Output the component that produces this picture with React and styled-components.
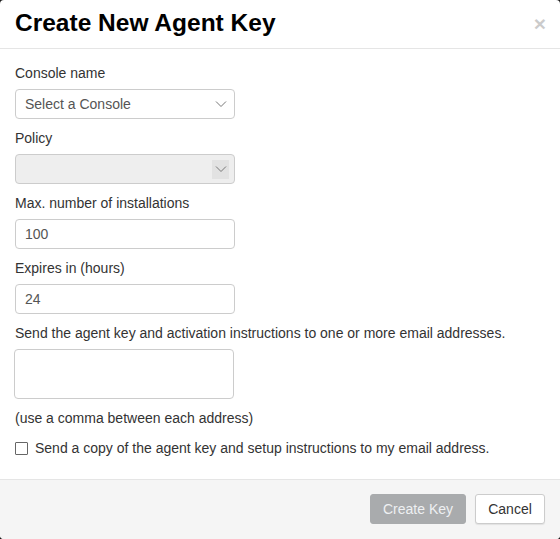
import React from "react";
import styled, { createGlobalStyle } from "styled-components";

const Global = createGlobalStyle`
  html, body { margin: 0; padding: 0; background: #1a1a1a; }
  body { font-family: "Liberation Sans", Arial, sans-serif; font-size: 14px; line-height: 20px; color: #333; }
  * { box-sizing: border-box; }
`;

const Dialog = styled.div`
  width: 560px;
  height: 539px;
  background: #fff;
  border-radius: 4px;
  overflow: hidden;
  display: flex;
  flex-direction: column;
`;

const Header = styled.div`
  height: 49px;
  padding: 8px 15px 0 15px;
  border-bottom: 1px solid #e5e5e5;
  display: flex;
  align-items: flex-start;
  justify-content: space-between;
`;

const Title = styled.h2`
  margin: 0;
  font-size: 24.5px;
  line-height: 30px;
  font-weight: 700;
  color: #000;
`;

const Close = styled.span`
  font-size: 21px;
  font-weight: 700;
  line-height: 21px;
  color: #000;
  opacity: 0.2;
  margin-top: 5px;
  margin-right: -1px;
`;

const Body = styled.div`
  flex: 1;
  padding: 14px 15px 0 15px;
`;

const Group = styled.div`
  margin-bottom: 9px;
`;

const Label = styled.div`
  margin-bottom: 6px;
  line-height: 20px;
`;

const Field = styled.div`
  position: relative;
  width: 220px;
  height: 30px;
  border: 1px solid #ccc;
  border-radius: 4px;
  background: ${(p) => (p.disabled ? "#eee" : "#fff")};
  color: #555;
  padding: 0 9px;
  display: flex;
  align-items: center;
  justify-content: space-between;
  font-size: 14px;
`;

const Area = styled.div`
  width: 220px;
  height: 50px;
  margin-left: -1px;
  border: 1px solid #ccc;
  border-radius: 4px;
  background: #fff;
`;

const Arrow = styled.span`
  display: flex;
  align-items: center;
  justify-content: center;
  width: 17px;
  height: 19px;
  margin-right: -4px;
  background: ${(p) => (p.boxed ? "#e2e2e2" : "transparent")};
`;

const Help = styled.div`
  margin-top: 9px;
  line-height: 20px;
`;

const CheckRow = styled.label`
  display: flex;
  align-items: center;
  gap: 7px;
  margin-top: 10px;
`;

const Box = styled.span`
  width: 13px;
  height: 13px;
  border: 1px solid #666;
  border-radius: 1px;
  background: #fff;
`;

const Footer = styled.div`
  height: 60px;
  border-top: 1px solid #e5e5e5;
  background: #f5f5f5;
  padding: 14px 15px 0 0;
  display: flex;
  justify-content: flex-end;
  gap: 9px;
`;

const Button = styled.button`
  height: 30px;
  padding: 0;
  white-space: nowrap;
  font-family: "Liberation Sans", Arial, sans-serif;
  font-size: 14px;
  border-radius: 3px;
  border: 1px solid ${(p) => (p.primary ? "#a9abad" : "#ccc")};
  background: ${(p) => (p.primary ? "#a9abad" : "#fff")};
  color: ${(p) => (p.primary ? "#eef0f2" : "#333")};
  box-shadow: ${(p) => (p.primary ? "none" : "0 1px 1px rgba(0,0,0,0.08)")};
  width: ${(p) => p.w}px;
`;

const Chevron = () => (
  <svg width="12" height="8" viewBox="0 0 12 8">
    <path d="M1 1.5 L6 6.5 L11 1.5" fill="none" stroke="#777" strokeWidth="1" />
  </svg>
);

export default function App() {
  return (
    <>
      <Global />
      <Dialog>
        <Header>
          <Title>Create New Agent Key</Title>
          <Close>×</Close>
        </Header>
        <Body>
          <Group>
            <Label>Console name</Label>
            <Field>
              <span>Select a Console</span>
              <Arrow><Chevron /></Arrow>
            </Field>
          </Group>
          <Group>
            <Label>Policy</Label>
            <Field disabled>
              <span />
              <Arrow boxed><Chevron /></Arrow>
            </Field>
          </Group>
          <Group>
            <Label>Max. number of installations</Label>
            <Field>100</Field>
          </Group>
          <Group>
            <Label>Expires in (hours)</Label>
            <Field>24</Field>
          </Group>
          <Label>Send the agent key and activation instructions to one or more email addresses.</Label>
          <Area />
          <Help>(use a comma between each address)</Help>
          <CheckRow>
            <Box />
            <span>Send a copy of the agent key and setup instructions to my email address.</span>
          </CheckRow>
        </Body>
        <Footer>
          <Button primary w={96}>Create Key</Button>
          <Button w={70}>Cancel</Button>
        </Footer>
      </Dialog>
    </>
  );
}
